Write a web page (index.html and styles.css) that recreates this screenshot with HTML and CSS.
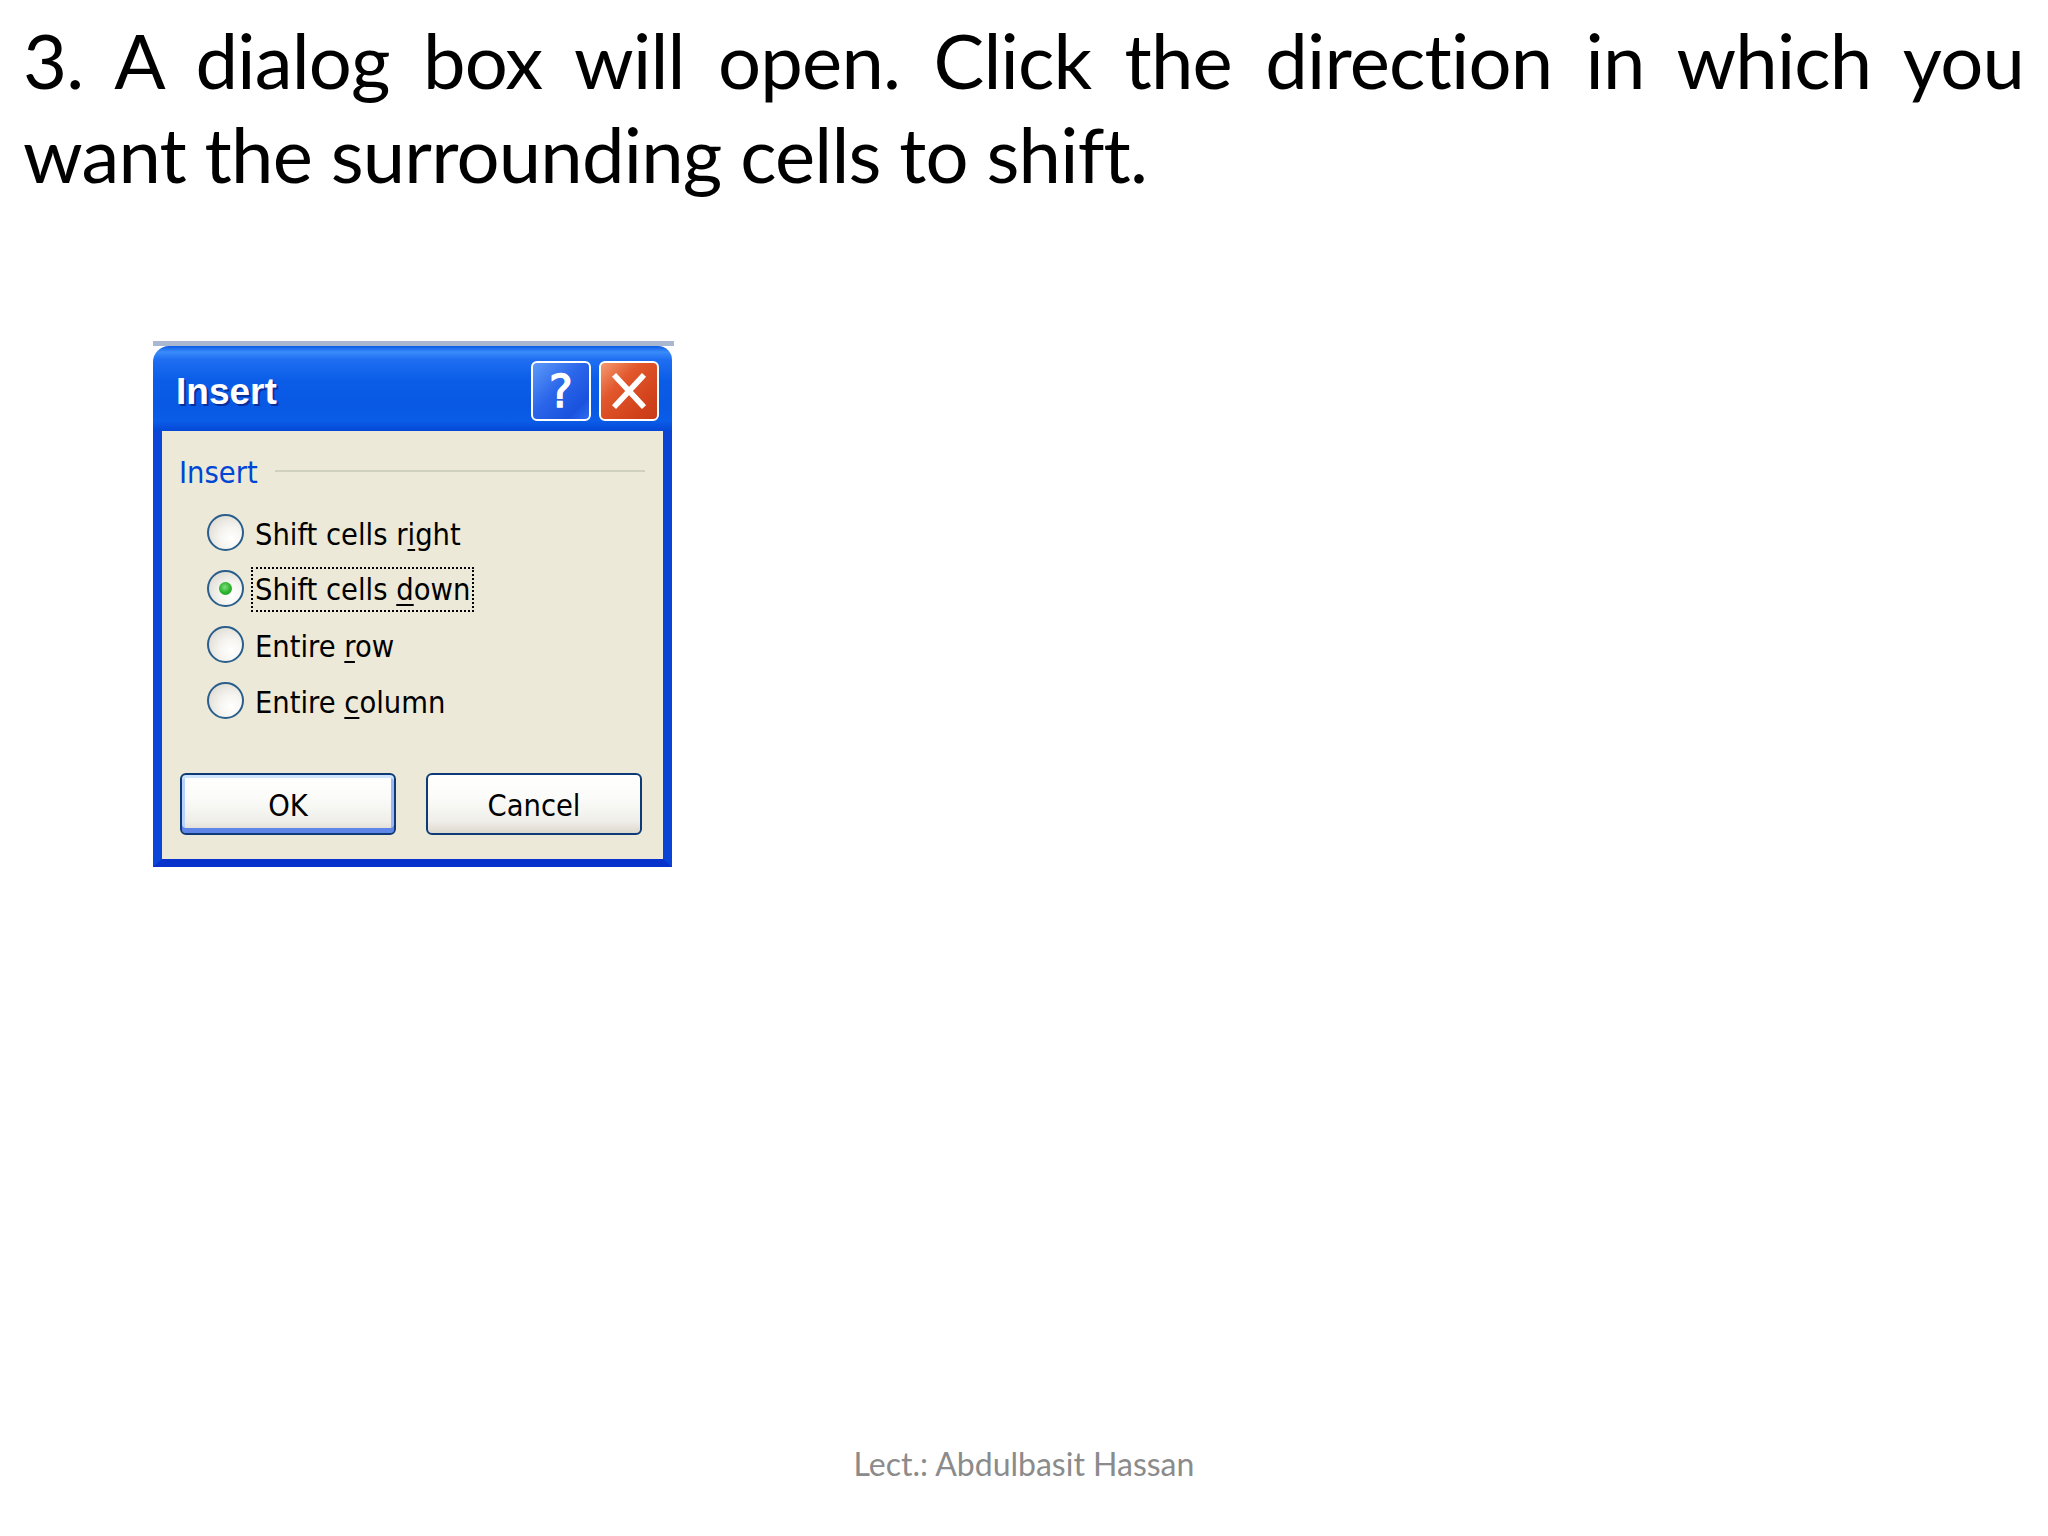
FILE: index.html
```html
<!DOCTYPE html>
<html>
<head>
<meta charset="utf-8">
<title>Insert cells</title>
<link rel="stylesheet" href="styles.css">
</head>
<body>
<div class="slide">
  <div class="heading">
    <div class="line1">3. A dialog box will open. Click the direction in which you</div>
    <div class="line2">want the surrounding cells to shift.</div>
  </div>

  <div class="dialog-wrap">
    <div class="strip"></div>
    <div class="dialog">
      <div class="titlebar">
        <span class="title">Insert</span>
        <div class="tb-buttons">
          <div class="tb-btn help">
            <svg viewBox="0 0 60 60" width="56" height="56">
              <text x="30" y="47" text-anchor="middle" class="qmark">?</text>
            </svg>
          </div>
          <div class="tb-btn close">
            <svg viewBox="0 0 60 60" width="56" height="56">
              <path d="M16 15 L44 45 M44 15 L16 45" stroke="#fff" stroke-width="6" stroke-linecap="square"/>
            </svg>
          </div>
        </div>
      </div>
      <div class="body">
        <div class="group-head">
          <span class="group-label">Insert</span>
          <span class="sep"></span>
        </div>
        <div class="radios">
          <div class="row"><span class="radio"></span><span class="lbl">Shift cells r<u>i</u>ght</span></div>
          <div class="row"><span class="radio checked"><span class="dot"></span></span><span class="lbl focus">Shift cells <u>d</u>own</span></div>
          <div class="row"><span class="radio"></span><span class="lbl">Entire <u>r</u>ow</span></div>
          <div class="row"><span class="radio"></span><span class="lbl">Entire <u>c</u>olumn</span></div>
        </div>
        <div class="actions">
          <div class="btn default"><span>OK</span></div>
          <div class="btn"><span>Cancel</span></div>
        </div>
      </div>
    </div>
  </div>

  <div class="footer">Lect.: Abdulbasit Hassan</div>
</div>
</body>
</html>
```

FILE: styles.css
```css
html, body {
  margin: 0;
  padding: 0;
  background: #ffffff;
}

.slide {
  width: 2048px;
  height: 1536px;
  display: flex;
  flex-direction: column;
  box-sizing: border-box;
  overflow: hidden;
}

.heading {
  padding: 13px 24px 0 23px;
  font-family: Lato, "Liberation Sans", sans-serif;
  font-size: 76px;
  line-height: 94px;
  letter-spacing: -0.8px;
  color: #000;
}

.line1 {
  text-align: justify;
  text-align-last: justify;
}

.line2 {
  white-space: nowrap;
}

/* ---------- dialog ---------- */
.dialog-wrap {
  margin-top: 140px;
  margin-left: 153px;
  width: 521px;
}

.strip {
  height: 5px;
  width: 521px;
  background: #a9b8d0;
}

.dialog {
  width: 519px;
  font-family: "DejaVu Sans Condensed", "DejaVu Sans", sans-serif;
  font-size: 30.5px;
  color: #000;
}

.titlebar {
  height: 85px;
  border-radius: 16px 14px 0 0;
  background: linear-gradient(to bottom,
      #0a5ae6 0%, #3a8cfa 7%, #1f6ef2 16%, #0b5de8 40%,
      #0858e4 70%, #0a5de8 88%, #0547d5 100%);
  display: flex;
  align-items: center;
  justify-content: space-between;
  padding: 0 13px 0 23px;
  box-sizing: border-box;
}

.title {
  font-family: "Liberation Sans", Arial, sans-serif;
  font-weight: bold;
  font-size: 37px;
  color: #ffffff;
  text-shadow: 2px 2px 0 #0b2f9a;
  margin-top: 6px;
}

.tb-buttons {
  display: flex;
  gap: 8px;
  margin-top: 5px;
}

.tb-btn {
  width: 60px;
  height: 60px;
  box-sizing: border-box;
  border: 2px solid #ffffff;
  border-radius: 6px;
  display: flex;
  align-items: center;
  justify-content: center;
}

.help {
  background: linear-gradient(135deg, #5d9af9 0%, #2a66ea 45%, #1a52dd 80%, #2e6cf2 100%);
}

.close {
  background: linear-gradient(135deg, #f49a72 0%, #e2572c 35%, #d2421b 75%, #c83a18 100%);
}

.qmark {
  font-family: "DejaVu Sans", sans-serif;
  font-size: 48px;
  fill: #ffffff;
  stroke: #ffffff;
  stroke-width: 1.5px;
}

.body {
  background: #ece9d8;
  border-left: 9px solid #0a46d8;
  border-right: 9px solid #0a44d6;
  border-bottom: 8px solid #0733cc;
  padding: 24px 18px 24px 17px;
}

.group-head {
  display: flex;
  align-items: flex-start;
  height: 36px;
  line-height: 36px;
}

.group-label {
  color: #0046d5;
}

.sep {
  flex: 1;
  height: 2px;
  background: #d0d0bf;
  margin: 15px 0 0 17px;
}

.radios {
  margin-top: 13px;
  padding-left: 28px;
  display: flex;
  flex-direction: column;
}

.row {
  height: 56px;
  display: flex;
  align-items: center;
}

.radio {
  width: 37px;
  height: 37px;
  box-sizing: border-box;
  border-radius: 50%;
  border: 2px solid #2a5f8c;
  background: radial-gradient(circle at 68% 68%, #ffffff 0%, #f6f5f1 35%, #dedbd2 85%, #d2cfc5 100%);
  display: flex;
  align-items: center;
  justify-content: center;
  flex: none;
  margin-right: 7px;
}

.dot {
  width: 13px;
  height: 13px;
  border-radius: 50%;
  background: radial-gradient(circle at 45% 40%, #7fe07f 0%, #2fb52f 50%, #17911a 100%);
}

.lbl {
  padding: 0 2px;
  border: 2px solid transparent;
  line-height: 41px;
  margin-top: 4px;
  white-space: nowrap;
}

.lbl u {
  text-decoration-thickness: 2px;
  text-underline-offset: 4px;
}

.lbl.focus {
  border: 2px dotted #000;
  margin-top: 3px;
}

.actions {
  margin-top: 45px;
  padding-left: 1px;
  display: flex;
  gap: 30px;
}

.btn {
  width: 216px;
  height: 62px;
  box-sizing: border-box;
  border: 2px solid #0e3b78;
  border-radius: 6px;
  background: linear-gradient(to bottom, #ffffff 0%, #fbfbf9 40%, #efeee9 80%, #dcd8cd 100%);
  display: flex;
  align-items: center;
  justify-content: center;
}

.btn span {
  margin-top: 2px;
}

.btn.default {
  box-shadow: inset 0 3px 0 #cfe4fd, inset 0 -5px 0 #5f86e6, inset 3px 0 0 #b9d2fb, inset -3px 0 0 #9cb8f4;
}

/* ---------- footer ---------- */
.footer {
  margin-top: auto;
  padding-bottom: 52px;
  height: 40px;
  line-height: 40px;
  text-align: center;
  font-family: Lato, "Liberation Sans", sans-serif;
  font-size: 32px;
  color: #8b8b8b;
}
```
